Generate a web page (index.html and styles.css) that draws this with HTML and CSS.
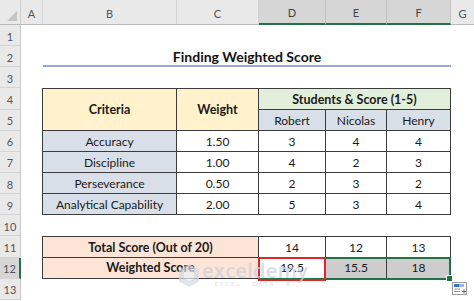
FILE: index.html
```html
<!DOCTYPE html>
<html>
<head>
<meta charset="utf-8">
<link rel="stylesheet" href="styles.css">
</head>
<body>
<div class="sheet">
  <div class="corner"><span class="tri"></span></div>
  <div class="ch">A</div>
  <div class="ch">B</div>
  <div class="ch">C</div>
  <div class="ch sel">D</div>
  <div class="ch sel">E</div>
  <div class="ch sel">F</div>
  <div class="ch last">G</div>

  <div class="rh r1">1</div>
  <div class="rh r2">2</div>
  <div class="rh r3">3</div>
  <div class="rh r4">4</div>
  <div class="rh r5">5</div>
  <div class="rh r6">6</div>
  <div class="rh r7">7</div>
  <div class="rh r8">8</div>
  <div class="rh r9">9</div>
  <div class="rh r10">10</div>
  <div class="rh r11">11</div>
  <div class="rh r12 rsel">12</div>
  <div class="rh r13">13</div>

  <div class="title">Finding Weighted Score</div>

  <table class="tbl main">
    <colgroup><col class="cb"><col class="cc"><col class="cd"><col class="ce"><col class="cf"></colgroup>
    <tr>
      <th rowspan="2" class="yel">Criteria</th>
      <th rowspan="2" class="yel">Weight</th>
      <th colspan="3" class="grn">Students &amp; Score (1-5)</th>
    </tr>
    <tr><td class="blu">Robert</td><td class="blu">Nicolas</td><td class="blu">Henry</td></tr>
    <tr><td class="blu">Accuracy</td><td>1.50</td><td>3</td><td>4</td><td>4</td></tr>
    <tr><td class="blu">Discipline</td><td>1.00</td><td>4</td><td>2</td><td>3</td></tr>
    <tr><td class="blu">Perseverance</td><td>0.50</td><td>2</td><td>3</td><td>2</td></tr>
    <tr><td class="blu">Analytical Capability</td><td>2.00</td><td>5</td><td>3</td><td>4</td></tr>
  </table>

  <table class="tbl totals">
    <colgroup><col class="cbc"><col class="cd"><col class="ce"><col class="cf"></colgroup>
    <tr><th class="pch">Total Score (Out of 20)</th><td>14</td><td>12</td><td>13</td></tr>
    <tr><th class="pch">Weighted Score</th><td>19.5</td><td class="gry">15.5</td><td class="gry">18</td></tr>
  </table>

  <div class="selbox"><span class="handle"></span></div>
  <div class="redbox"></div>
  <div class="qa">
    <svg width="15" height="13" viewBox="0 0 15 13">
      <rect x="0.5" y="0.5" width="14" height="12" fill="#fff" stroke="#9a9a9a"/>
      <rect x="2" y="2" width="5" height="3" fill="#3b6fc4"/>
      <rect x="7" y="2" width="5" height="3" fill="#9db5e0"/>
      <line x1="2" y1="7" x2="8" y2="7" stroke="#9a9a9a"/>
      <line x1="2" y1="9.5" x2="8" y2="9.5" stroke="#9a9a9a"/>
      <path d="M10 9.5h4M12 7.5v4" stroke="#666" stroke-width="1"/>
    </svg>
  </div>

  <div class="wm">
    <svg class="hex" width="22" height="25" viewBox="0 0 22 25">
      <polygon points="11,1 21,6.5 21,18.5 11,24 1,18.5 1,6.5" fill="#d3d9e6"/>
      <polygon points="11,7 16,9.8 16,15.2 11,18 6,15.2 6,9.8" fill="#eef1f6"/>
    </svg>
    <div class="wmtext">
      <div class="wmname">exceldemy</div>
      <div class="wmsub">EXCEL · DATA · BI</div>
    </div>
  </div>
</div>
</body>
</html>
```

FILE: styles.css
```css
html, body {
  margin: 0;
  padding: 0;
  background: #ffffff;
}

.sheet {
  position: relative;
  width: 474px;
  height: 301px;
  overflow: hidden;
  display: grid;
  grid-template-columns: 21px 22px 134px 82px 67px 61px 64px 1fr;
  grid-template-rows: 25px repeat(13, 21.15px) 1fr;
  font-family: Lato, "Liberation Sans", sans-serif;
  font-size: 12px;
  color: #1a1a1a;
  background: #fff;
}

.corner {
  grid-row: 1;
  grid-column: 1;
  background: #e9e9e9;
  border-right: 1px solid #cfcfcf;
  border-bottom: 1px solid #b9b9b9;
  position: relative;
}

.tri {
  position: absolute;
  right: 3px;
  bottom: 3px;
  width: 0;
  height: 0;
  border-left: 10px solid transparent;
  border-bottom: 10px solid #c4c4c4;
}

.ch {
  grid-row: 1;
  background: #e9e9e9;
  border-right: 1px solid #d2d2d2;
  border-bottom: 1px solid #b9b9b9;
  color: #555;
  font-size: 11px;
  display: flex;
  align-items: center;
  justify-content: center;
  padding-top: 2px;
  box-sizing: border-box;
}

.ch.sel {
  background: #d6d6d6;
  color: #444;
  border-bottom: 2px solid #217346;
  border-right-color: #c2c2c2;
}

.ch.last {
  border-right: none;
}

.rh {
  grid-column: 1;
  background: #e9e9e9;
  border-right: 1px solid #c8c8c8;
  border-bottom: 1px solid #d4d4d4;
  color: #555;
  font-size: 11px;
  display: flex;
  align-items: center;
  justify-content: center;
  box-sizing: border-box;
  padding-top: 2px;
}

.rh.rsel {
  background: #d6d6d6;
  border-right: 2px solid #217346;
}

.r1 { grid-row: 2; }
.r2 { grid-row: 3; }
.r3 { grid-row: 4; }
.r4 { grid-row: 5; }
.r5 { grid-row: 6; }
.r6 { grid-row: 7; }
.r7 { grid-row: 8; }
.r8 { grid-row: 9; }
.r9 { grid-row: 10; }
.r10 { grid-row: 11; }
.r11 { grid-row: 12; }
.r12 { grid-row: 13; }
.r13 { grid-row: 14; }

.title {
  grid-row: 3;
  grid-column: 3 / 8;
  display: flex;
  align-items: center;
  justify-content: center;
  font-weight: 700;
  font-size: 14px;
  color: #111;
  border-bottom: 2px solid #9aa6df;
  box-sizing: border-box;
  padding-top: 1px;
}

.tbl {
  border-collapse: collapse;
  table-layout: fixed;
  width: 100%;
  height: 100%;
  margin-left: -1px;
}

.tbl th,
.tbl td {
  border: 1px solid #3c3c3c;
  padding: 0;
  text-align: center;
  vertical-align: middle;
  white-space: nowrap;
  overflow: hidden;
  font-size: 12px;
}

.tbl th {
  font-weight: 700;
  font-size: 12.5px;
}

.main {
  grid-row: 5 / 11;
  grid-column: 3 / 8;
}

.totals {
  grid-row: 12 / 14;
  grid-column: 3 / 8;
}

.cb { width: 134px; }
.cc { width: 82px; }
.cbc { width: 216px; }
.cd { width: 67px; }
.ce { width: 61px; }
.cf { width: 64px; }

.yel { background: #fff2cc; }
.grn { background: #e2efda; }
.blu { background: #d9dfe8; }
.pch { background: #fce4d6; }
.gry { background: #cdcdcd; }

.selbox {
  grid-row: 13;
  grid-column: 5 / 8;
  border: 2px solid #217346;
  margin: -1px 0 -1px -1px;
  position: relative;
  pointer-events: none;
}

.handle {
  position: absolute;
  right: -4px;
  bottom: -4px;
  width: 5px;
  height: 5px;
  background: #217346;
  border: 1px solid #fff;
}

.redbox {
  grid-row: 13;
  grid-column: 5;
  border: 2px solid #e0262a;
  margin: -1px 0 -2px -1px;
  position: relative;
}

.qa {
  grid-row: 14;
  grid-column: 8;
  align-self: start;
  justify-self: start;
  margin-top: 3px;
  margin-left: 1px;
  display: flex;
}

.wm {
  position: absolute;
  left: 178px;
  top: 262px;
  display: flex;
  align-items: center;
  gap: 2px;
  opacity: 0.7;
  pointer-events: none;
}

.wmtext {
  display: flex;
  flex-direction: column;
  align-items: center;
}

.wmname {
  font-family: "Open Sans", Lato, sans-serif;
  font-size: 20px;
  font-weight: 600;
  color: #c9d0de;
  line-height: 18px;
  letter-spacing: 0.3px;
}

.wmsub {
  font-family: "Open Sans", sans-serif;
  font-size: 6px;
  letter-spacing: 2px;
  color: #c9d0de;
  line-height: 8px;
}
```
